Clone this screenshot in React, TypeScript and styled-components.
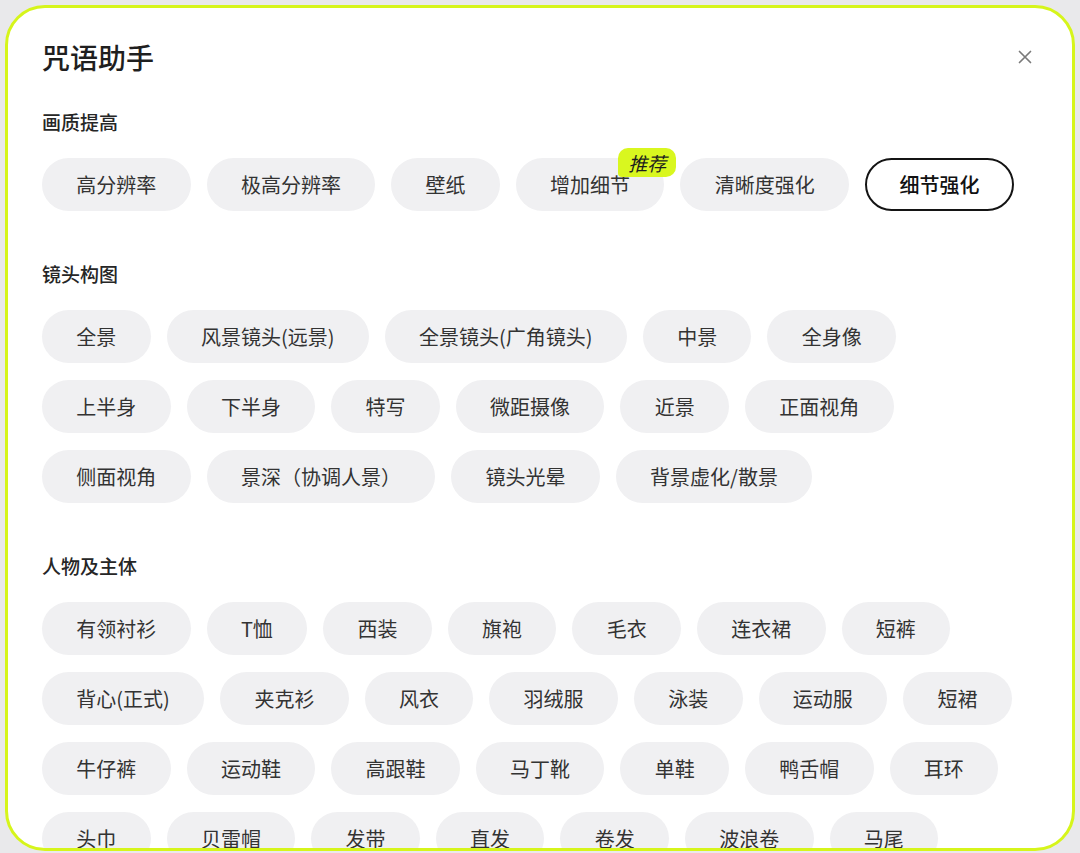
import React from 'react';
import styled, { createGlobalStyle } from 'styled-components';

const GlobalStyle = createGlobalStyle`
  html, body {
    margin: 0;
    padding: 0;
    background: #e9e9eb;
    font-family: 'Noto Sans CJK SC', 'Noto Sans', sans-serif;
  }
  * { box-sizing: border-box; }
`;

const Page = styled.div`
  width: 1080px;
  height: 853px;
  padding: 5px 0 0 5px;
  overflow: hidden;
`;

const Modal = styled.div`
  width: 1070px;
  height: 846px;
  background: #ffffff;
  border: 3px solid #d6f51b;
  border-radius: 40px;
  padding: 29px 34px 0 34px;
  overflow: hidden;
`;

const Header = styled.div`
  display: flex;
  align-items: center;
  justify-content: space-between;
  height: 40px;
`;

const Title = styled.h1`
  margin: 0;
  font-size: 28px;
  line-height: 40px;
  font-weight: 500;
  color: #1f1f1f;
`;

const CloseButton = styled.button`
  border: none;
  background: none;
  padding: 0;
  width: 24px;
  height: 24px;
  margin-right: 1px;
  display: flex;
  align-items: center;
  justify-content: center;
  cursor: pointer;
`;

const Section = styled.section<{ $first?: boolean }>`
  margin-top: ${p => (p.$first ? '32px' : '50px')};
`;

const SectionTitle = styled.h2`
  margin: 0 0 23px 0;
  font-size: 19px;
  line-height: 26px;
  font-weight: 500;
  color: #262626;
`;

const ChipList = styled.div`
  display: flex;
  flex-wrap: wrap;
  column-gap: 16px;
  row-gap: 17px;
  width: 995px;
`;

const Chip = styled.div<{ $selected?: boolean }>`
  position: relative;
  height: 53px;
  padding: 0 ${p => (p.$selected ? '32.5px' : '34.3px')};
  border-radius: 27px;
  display: flex;
  align-items: center;
  font-size: 20px;
  color: ${p => (p.$selected ? '#111' : '#333')};
  font-weight: ${p => (p.$selected ? 500 : 400)};
  background: ${p => (p.$selected ? '#ffffff' : '#f0f0f2')};
  border: ${p => (p.$selected ? '2px solid #141414' : 'none')};
  white-space: nowrap;
`;

const Badge = styled.span`
  position: absolute;
  top: -10px;
  right: -12px;
  height: 29px;
  padding: 0 10px;
  border-radius: 10px 10px 10px 4px;
  background: #d9f71f;
  color: #1d1d1d;
  font-size: 19px;
  line-height: 29px;
  font-style: italic;
  font-weight: 400;
`;

type Item = { label: string; badge?: string; selected?: boolean };

const sections: { title: string; items: Item[] }[] = [
  {
    title: '画质提高',
    items: [
      { label: '高分辨率' },
      { label: '极高分辨率' },
      { label: '壁纸' },
      { label: '增加细节', badge: '推荐' },
      { label: '清晰度强化' },
      { label: '细节强化', selected: true },
    ],
  },
  {
    title: '镜头构图',
    items: [
      '全景', '风景镜头(远景)', '全景镜头(广角镜头)', '中景', '全身像',
      '上半身', '下半身', '特写', '微距摄像', '近景', '正面视角',
      '侧面视角', '景深（协调人景）', '镜头光晕', '背景虚化/散景',
    ].map(label => ({ label })),
  },
  {
    title: '人物及主体',
    items: [
      '有领衬衫', 'T恤', '西装', '旗袍', '毛衣', '连衣裙', '短裤',
      '背心(正式)', '夹克衫', '风衣', '羽绒服', '泳装', '运动服', '短裙',
      '牛仔裤', '运动鞋', '高跟鞋', '马丁靴', '单鞋', '鸭舌帽', '耳环',
      '头巾', '贝雷帽', '发带', '直发', '卷发', '波浪卷', '马尾',
    ].map(label => ({ label })),
  },
];

const App: React.FC = () => {
  return (
    <>
      <GlobalStyle />
      <Page>
        <Modal>
          <Header>
            <Title>咒语助手</Title>
            <CloseButton aria-label="关闭">
              <svg width="14" height="14" viewBox="0 0 14 14">
                <path d="M1.5 1.5 L12.5 12.5 M12.5 1.5 L1.5 12.5" stroke="#7a7a7a" strokeWidth="1.7" strokeLinecap="round" />
              </svg>
            </CloseButton>
          </Header>

          {sections.map((section, i) => (
            <Section key={section.title} $first={i === 0}>
              <SectionTitle>{section.title}</SectionTitle>
              <ChipList>
                {section.items.map(item => (
                  <Chip key={item.label} $selected={item.selected}>
                    {item.label}
                    {item.badge && <Badge>{item.badge}</Badge>}
                  </Chip>
                ))}
              </ChipList>
            </Section>
          ))}
        </Modal>
      </Page>
    </>
  );
};

export default App;
